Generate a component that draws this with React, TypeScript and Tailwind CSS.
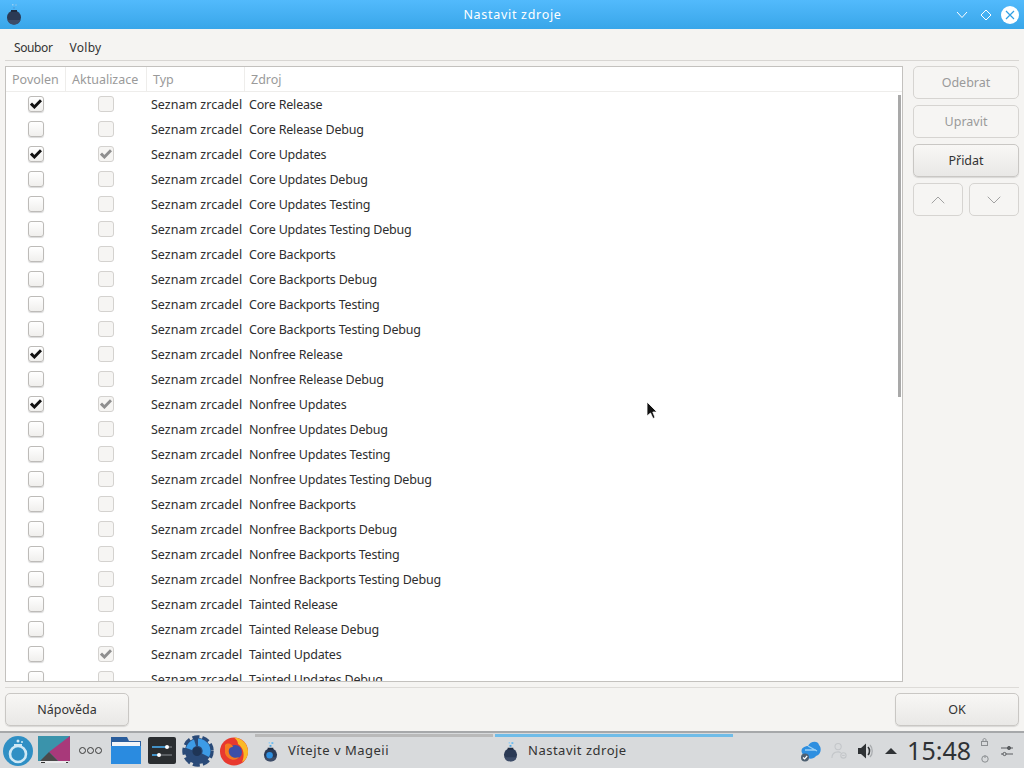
import type { ReactNode } from "react"
import { ChevronDown, ChevronUp } from "lucide-react"

const rows: [string, boolean, boolean][] = [
  ["Core Release", true, false],
  ["Core Release Debug", false, false],
  ["Core Updates", true, true],
  ["Core Updates Debug", false, false],
  ["Core Updates Testing", false, false],
  ["Core Updates Testing Debug", false, false],
  ["Core Backports", false, false],
  ["Core Backports Debug", false, false],
  ["Core Backports Testing", false, false],
  ["Core Backports Testing Debug", false, false],
  ["Nonfree Release", true, false],
  ["Nonfree Release Debug", false, false],
  ["Nonfree Updates", true, true],
  ["Nonfree Updates Debug", false, false],
  ["Nonfree Updates Testing", false, false],
  ["Nonfree Updates Testing Debug", false, false],
  ["Nonfree Backports", false, false],
  ["Nonfree Backports Debug", false, false],
  ["Nonfree Backports Testing", false, false],
  ["Nonfree Backports Testing Debug", false, false],
  ["Tainted Release", false, false],
  ["Tainted Release Debug", false, false],
  ["Tainted Updates", false, true],
  ["Tainted Updates Debug", false, false],
]

function Check({ color }: { color: string }) {
  return (
    <svg width="12" height="10" viewBox="0 0 12 10">
      <path d="M1 4.6 L4.4 8 L11 1.2" fill="none" stroke={color} strokeWidth="2.9" />
    </svg>
  )
}

function Box({ checked, disabled }: { checked: boolean; disabled?: boolean }) {
  if (disabled) {
    return (
      <div className="w-4 h-4 rounded-[3px] border border-[#d4d2cf] bg-[#f6f5f3] flex items-center justify-center">
        {checked && <Check color="#8f8f8f" />}
      </div>
    )
  }
  return (
    <div className="w-4 h-4 rounded-[3px] border border-[#bdbbb8] bg-gradient-to-b from-white to-[#f0efed] shadow-[0_1px_1px_rgba(0,0,0,0.15)] flex items-center justify-center">
      {checked && <Check color="#111" />}
    </div>
  )
}

function Btn({ label, disabled, className, children }: { label?: string; disabled?: boolean; className: string; children?: ReactNode }) {
  return (
    <div
      className={`h-[33px] rounded-[5px] border flex items-center justify-center text-[12.5px] ${
        disabled
          ? "border-[#d6d4d1] bg-[#f6f5f3] text-[#9a9a9a]"
          : "border-[#c9c7c4] bg-gradient-to-b from-[#f8f7f5] to-[#e9e8e6] text-[#333] shadow-[0_1px_1px_rgba(0,0,0,0.12)]"
      } ${className}`}
    >
      {label && <span className="pt-[2px]">{label}</span>}
      {children}
    </div>
  )
}

function Pot({ size = 16, globe }: { size?: number; globe?: boolean }) {
  return (
    <svg width={size} height={size + 6} viewBox="0 0 16 22">
      <circle cx="8" cy="14.5" r="7" fill="#2b3a55" />
      <path d="M1.4 17 H14.6 A7 7 0 0 1 1.4 17 Z" fill="#3d4c68" />
      <rect x="5" y="7" width="6" height="2" fill="#1f2b40" />
      {globe && <circle cx="7" cy="15" r="3.5" fill="#2e8fe0" />}
      <rect x="7" y="4" width="2" height="2" fill="#4aa6e8" />
      <rect x="9" y="1" width="2" height="2" fill="#6cbcf0" />
      <rect x="6" y="1" width="1.5" height="1.5" fill="#8fcdf5" />
    </svg>
  )
}

function TaskbarIcons() {
  return (
    <div className="flex items-center h-full">
      <svg width="32" height="32" viewBox="0 0 32 32" className="ml-[2px]">
        <circle cx="16" cy="16" r="15" fill="#2f8fc4" />
        <circle cx="16" cy="19" r="8" fill="none" stroke="#cfe8f5" strokeWidth="2.6" />
        <rect x="12" y="9" width="8" height="2.5" fill="#cfe8f5" />
        <circle cx="16" cy="6" r="1.5" fill="#cfe8f5" />
        <circle cx="20" cy="7" r="1" fill="#cfe8f5" />
      </svg>
      <svg width="33" height="29" viewBox="0 0 33 29" className="ml-[4px]">
        <rect x="0" y="0" width="32" height="25" fill="#3a93ab" />
        <path d="M32 0 V25 H20 L11 16 Z" fill="#a8397a" />
        <path d="M2 25 L11 16 L20 25 Z" fill="#4a4a4a" />
        <rect x="2" y="25" width="28" height="2" fill="#e9eaeb" />
        <rect x="3" y="26" width="4" height="1" fill="#333" />
        <rect x="28" y="26" width="2" height="1" fill="#333" />
      </svg>
      <div className="ml-[8px] flex gap-[1px]">
        <div className="w-[7px] h-[7px] rounded-full border-[1.5px] border-[#3a3a3a]" />
        <div className="w-[7px] h-[7px] rounded-full border-[1.5px] border-[#3a3a3a]" />
        <div className="w-[7px] h-[7px] rounded-full border-[1.5px] border-[#3a3a3a]" />
      </div>
      <svg width="30" height="28" viewBox="0 0 30 28" className="ml-[9px]">
        <path d="M0 0 H16 L18 4 H30 V27 H0 Z" fill="#2a5d9c" />
        <rect x="1" y="5" width="28" height="4" fill="#f2f5f8" />
        <rect x="0" y="9" width="30" height="18" fill="#2a8be0" />
      </svg>
      <svg width="28" height="27" viewBox="0 0 28 27" className="ml-[7px]">
        <rect x="0" y="0" width="28" height="27" rx="2" fill="#2a2d30" />
        <path d="M4 10 H24 M4 18 H24" stroke="#8a8f94" strokeWidth="1" />
        <path d="M4 10 H19 M4 18 H11" stroke="#3da2e8" strokeWidth="1.5" />
        <circle cx="19" cy="10" r="2" fill="#fff" />
        <circle cx="11" cy="18" r="2" fill="#fff" />
      </svg>
      <svg width="32" height="32" viewBox="0 0 32 32" className="ml-[6px]">
        <circle cx="16" cy="16" r="13" fill="#2a4a78" />
        <circle cx="16" cy="16" r="14" fill="none" stroke="#2a4a78" strokeWidth="3.5" strokeDasharray="7 3" />
        <path d="M16 3.5 A12.5 12.5 0 0 1 27 22 L20 18.5 A5 5 0 0 0 16 11 Z" fill="#3d9be6" />
        <path d="M4 13 A12.5 12.5 0 0 1 12 4.5 L14 11 A6 6 0 0 0 10 15 Z" fill="#3d9be6" />
        <circle cx="15" cy="16.5" r="4.5" fill="#1f3556" />
      </svg>
      <svg width="30" height="30" viewBox="0 0 30 30" className="ml-[5px]">
        <circle cx="15" cy="15.5" r="14" fill="#e8392f" />
        <path d="M15 1.5 C24 2 29 9 29 15.5 C29 20 27 24 23 26 C26 20 25 12 19 8 C19 5 17 3 15 1.5 Z" fill="#fbb925" />
        <circle cx="16" cy="16" r="7" fill="#3d4fa8" />
        <path d="M6 9 C9 6 13 8 14 11 C11 11 9 13 10 17 C11 21 16 23 20 21 C17 26 8 24 6 17 Z" fill="#f47a20" />
      </svg>
    </div>
  )
}

function Tray() {
  return (
    <div className="flex items-center h-full ml-auto">
      <svg width="22" height="22" viewBox="0 0 22 22">
        <path d="M2 13 C0 8 5 6 8 6 C10 1 18 0 19 5 C22 8 21 15 16 16 C13 20 6 20 2 13 Z" fill="#2e8fe0" />
        <path d="M5 10 H16 M8 6 L17 11" stroke="#9ad0f5" strokeWidth="1.4" />
        <circle cx="5" cy="17.5" r="4" fill="#4d5f70" />
        <path d="M3 17.5 L4.6 19 L7.2 16" stroke="#fff" strokeWidth="1.2" fill="none" />
      </svg>
      <svg width="16" height="18" viewBox="0 0 18 20" className="ml-[9px]" fill="none" stroke="#c3c6c9" strokeWidth="1.2">
        <circle cx="8" cy="5" r="3.5" />
        <path d="M1 18 C1 12 5 11 8 11 C9 11 10 11 11 12" />
        <circle cx="14" cy="15" r="3" />
        <path d="M12.5 15 H15.5" />
      </svg>
      <svg width="16" height="18" viewBox="0 0 16 18" className="ml-[10px]">
        <path d="M1 6 H4 L9 1.5 V16.5 L4 12 H1 Z" fill="#2f3235" />
        <path d="M11 5 C13 7 13 11 11 13" stroke="#2f3235" strokeWidth="1.6" fill="none" />
        <path d="M13 3 C16 6 16 12 13 15" stroke="#a9acaf" strokeWidth="1.3" fill="none" />
      </svg>
      <svg width="12" height="6" viewBox="0 0 12 6" className="ml-[12px]">
        <path d="M0 6 L6 0 L12 6 Z" fill="#2f3235" />
      </svg>
      <span className="ml-[10px] text-[25px] leading-none text-[#2f3235]">15:48</span>
      <div className="ml-[9px] w-[9px] flex flex-col items-center gap-[9px]">
        <svg width="7" height="8" viewBox="0 0 7 8" fill="none" stroke="#8b8e91">
          <rect x="0.5" y="3.5" width="6" height="4" />
          <path d="M2 3.5 V2 C2 0 5 0 5 2 V3.5" />
        </svg>
        <svg width="8" height="8" viewBox="0 0 8 8" fill="none" stroke="#8b8e91">
          <circle cx="4" cy="4" r="3.2" />
          <path d="M4 0.5 V3" />
        </svg>
      </div>
      <svg width="12" height="12" viewBox="0 0 12 12" className="ml-[12px] mr-[11px]" stroke="#5a5d60" fill="none">
        <path d="M0 3 H12 M0 9 H12" />
        <circle cx="8" cy="3" r="1.6" fill="#5a5d60" />
        <circle cx="3.5" cy="9" r="1.6" fill="#d8dadc" />
      </svg>
    </div>
  )
}

export default function App() {
  return (
    <div className="w-[1024px] h-[768px] flex flex-col overflow-hidden bg-[#f5f4f2] font-['Noto_Sans',sans-serif] text-[12.5px] text-[#2e2e2e] relative">
      <div className="h-[29px] shrink-0 bg-gradient-to-b from-[#52bafc] to-[#38a6e9] grid grid-cols-[1fr_auto_1fr] items-center pl-[6px] pr-[5px]">
        <div className="-mt-[2px]">
          <Pot size={16} />
        </div>
        <div className="text-white text-[12.5px] tracking-[0.7px] pt-[2px]">Nastavit zdroje</div>
        <div className="flex items-center justify-end">
          <svg width="12" height="8" viewBox="0 0 12 8" className="mr-[12px]" fill="none" stroke="#fff" strokeWidth="1">
            <path d="M1 1 L6 6.5 L11 1" />
          </svg>
          <svg width="12" height="12" viewBox="0 0 12 12" className="mr-[9px]" fill="none" stroke="#fff" strokeWidth="1">
            <path d="M6 1 L11 6 L6 11 L1 6 Z" />
          </svg>
          <div className="w-[18px] h-[18px] rounded-full bg-white flex items-center justify-center">
            <svg width="10" height="10" viewBox="0 0 10 10" stroke="#2f9fe4" strokeWidth="1.2">
              <path d="M1 1 L9 9 M9 1 L1 9" />
            </svg>
          </div>
        </div>
      </div>

      <div className="h-[31px] shrink-0 flex items-center gap-[17px] px-[14px] pt-[6px] text-[12px] text-[#333]">
        <span className="tracking-[-0.4px]">Soubor</span>
        <span className="tracking-[0.3px]">Volby</span>
      </div>
      <div className="h-px shrink-0 mx-[5px] bg-[#d8d6d3]" />

      <div className="h-[622px] shrink-0 mt-[5px] mx-[5px] flex gap-[10px]">
        <div className="w-[898px] h-[616px] border border-[#c3c1be] bg-white overflow-hidden relative">
          <div className="h-[25px] flex items-center border-b border-[#eeedeb] text-[#9a9a9a]">
            <div className="w-[60px] pl-[6px] pt-[2px] h-full flex items-center border-r border-[#eeedeb]">Povolen</div>
            <div className="w-[81px] pl-[6px] pt-[2px] h-full flex items-center border-r border-[#eeedeb]">Aktualizace</div>
            <div className="w-[98px] pl-[6px] pt-[2px] h-full flex items-center border-r border-[#eeedeb]">Typ</div>
            <div className="pl-[6px] pt-[2px]">Zdroj</div>
          </div>
          {rows.map(([name, on, upd]) => (
            <div key={name} className="h-[25px] flex items-center">
              <div className="w-[60px] flex justify-center mb-[2px]">
                <Box checked={on} />
              </div>
              <div className="w-[80px] flex justify-center mb-[2px]">
                <Box checked={upd} disabled />
              </div>
              <div className="w-[98px] pl-[5px] pt-[2px]">Seznam zrcadel</div>
              <div className="pl-[5px] pt-[2px] tracking-[-0.2px]">{name}</div>
            </div>
          ))}
          <div className="absolute right-[1px] top-[28px] w-[3px] h-[302px] bg-[#a9a9a9]" />
        </div>

        <div className="w-[106px] flex flex-col gap-[6px]">
          <Btn label="Odebrat" disabled className="w-full" />
          <Btn label="Upravit" disabled className="w-full" />
          <Btn label="Přidat" className="w-full" />
          <div className="flex gap-[6px]">
            <Btn disabled className="w-[50px]">
              <ChevronUp size={24} strokeWidth={0.9} className="text-[#999]" />
            </Btn>
            <Btn disabled className="w-[50px]">
              <ChevronDown size={24} strokeWidth={0.9} className="text-[#999]" />
            </Btn>
          </div>
        </div>
      </div>

      <div className="h-px shrink-0 mx-[5px] -mt-[1px] bg-[#dddbd8]" />
      <div className="h-[43px] shrink-0 px-[5px] pt-[5px] flex justify-between">
        <Btn label="Nápověda" className="w-[124px]" />
        <Btn label="OK" className="w-[124px]" />
      </div>

      <div className="flex-1 border-t-2 border-[#a6a8aa] bg-[#d8dadc] flex items-center">
        <TaskbarIcons />
        <div className="w-[238px] ml-[6px] h-full flex flex-col">
          <div className="h-[3px] mt-[1px] bg-[#b9b9b9]" />
          <div className="flex-1 flex items-center gap-[10px] pl-[8px] pb-[3px] text-[13px] text-[#333]">
            <Pot size={15} globe />
            <span className="tracking-[0.5px]">Vítejte v Mageii</span>
          </div>
        </div>
        <div className="w-[238px] ml-[2px] h-full flex flex-col">
          <div className="h-[3px] mt-[1px] bg-[#6fbce8]" />
          <div className="flex-1 flex items-center gap-[10px] pl-[8px] pb-[3px] text-[13px] text-[#333]">
            <Pot size={15} />
            <span className="tracking-[0.5px]">Nastavit zdroje</span>
          </div>
        </div>
        <Tray />
      </div>

      <svg width="12" height="19" viewBox="0 0 12 19" className="absolute left-[646px] top-[401px]">
        <path d="M1 1 V15 L4.5 12 L7 17.5 L9 16.5 L6.8 11 H11 Z" fill="#111" stroke="#fff" strokeWidth="0.8" />
      </svg>
    </div>
  )
}
